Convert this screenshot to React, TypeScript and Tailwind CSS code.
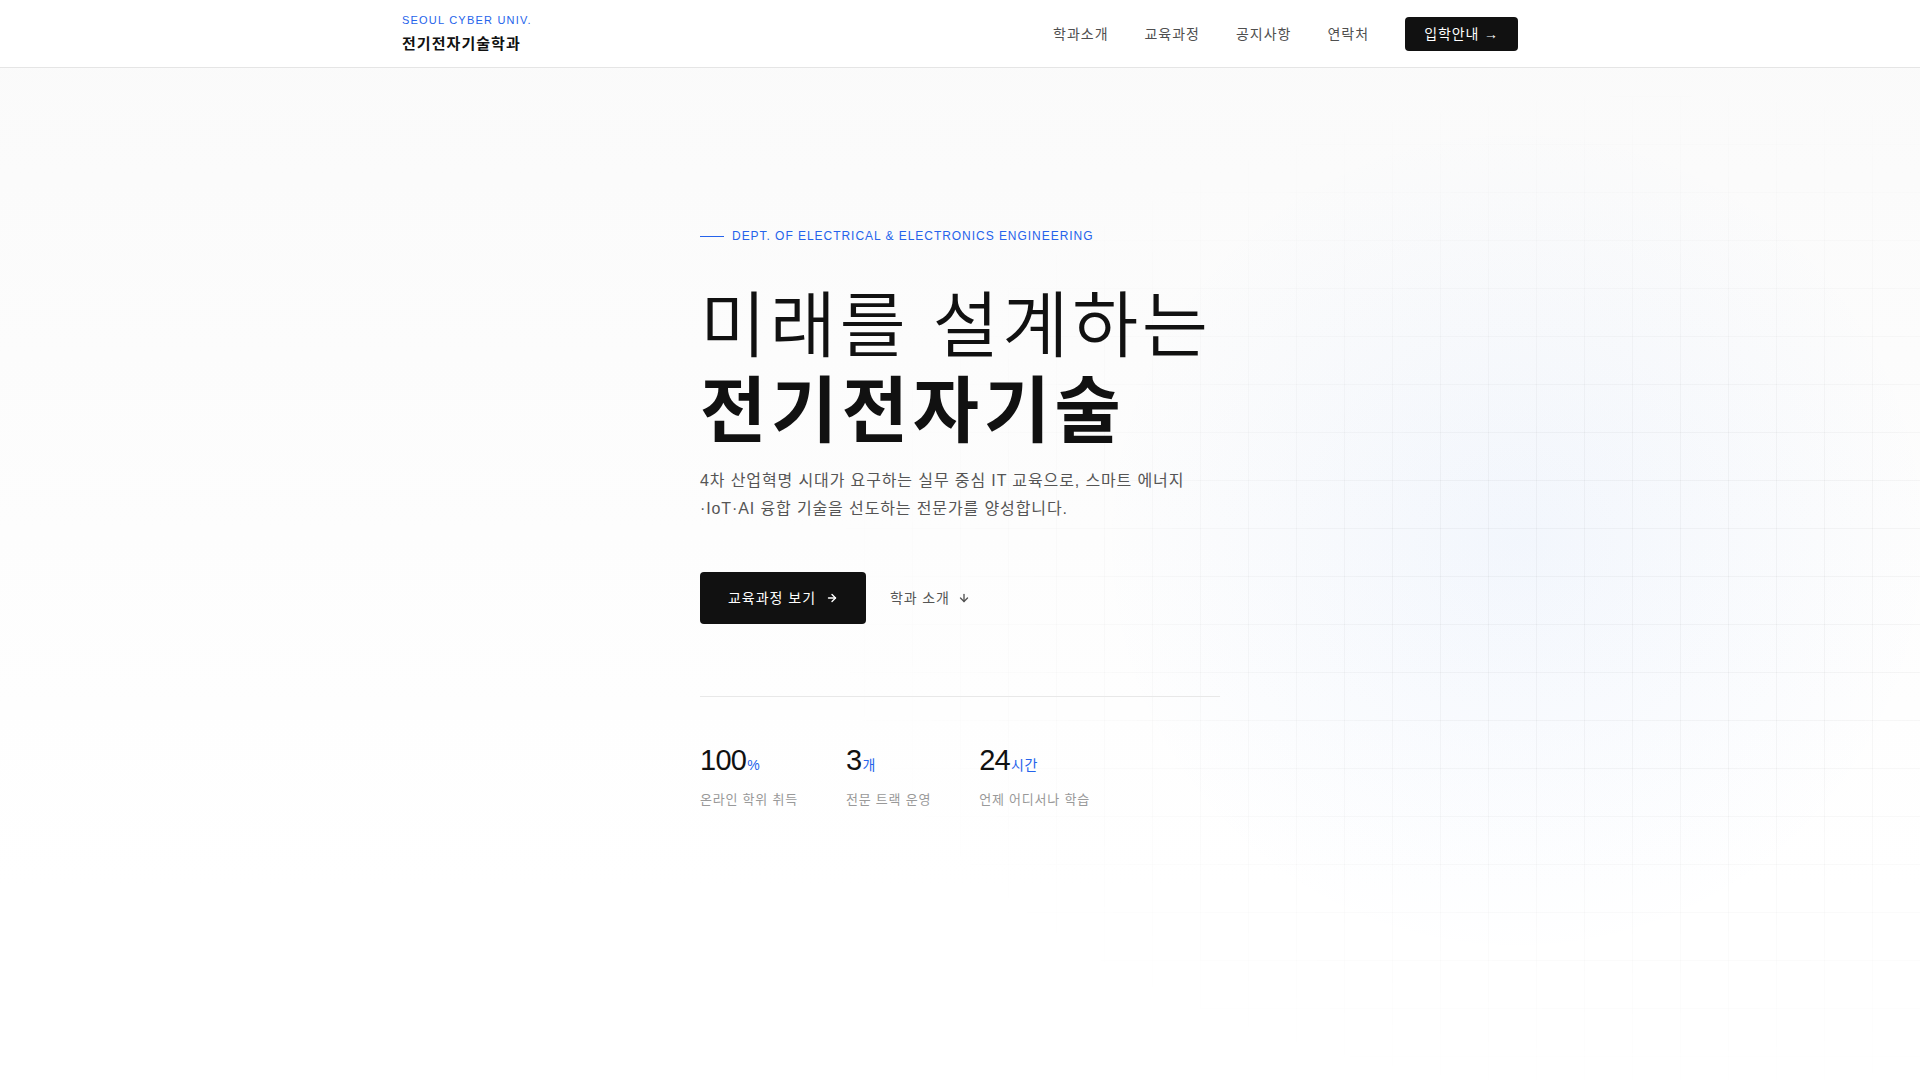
import { ArrowDown, ArrowRight } from "lucide-react";

const navItems = ["학과소개", "교육과정", "공지사항", "연락처"];

const stats = [
  { value: "100", unit: "%", label: "온라인 학위 취득" },
  { value: "3", unit: "개", label: "전문 트랙 운영" },
  { value: "24", unit: "시간", label: "언제 어디서나 학습" },
];

function Header() {
  return (
    <header className="fixed inset-x-0 top-0 z-20 border-b border-[#e5e5e5] bg-white">
      <div className="mx-auto flex h-[67px] w-[1116px] items-center justify-between">
        <a href="#" className="flex flex-col">
          <span className="text-[11px] leading-4 tracking-[0.11em] text-[#2563eb]">SEOUL CYBER UNIV.</span>
          <span className="mt-[5px] text-[15px] font-bold leading-[22px] tracking-[0.07em] text-[#111]">전기전자기술학과</span>
        </a>
        <nav className="flex items-center gap-9">
          {navItems.map((item) => (
            <a key={item} href="#" className="text-sm leading-5 tracking-[0.07em] text-[#4f4f4f]">
              {item}
            </a>
          ))}
          <a
            href="#"
            className="flex h-[34px] w-[113px] items-center justify-center rounded-[4px] bg-[#111] text-sm tracking-[0.06em] text-white"
          >
            입학안내 →
          </a>
        </nav>
      </div>
    </header>
  );
}

function Stat({ value, unit, label }: { value: string; unit: string; label: string }) {
  return (
    <div className="flex flex-col">
      <div className="flex items-baseline leading-[28px]">
        <span className="text-[29px] leading-[28px] tracking-tight text-[#111]">{value}</span>
        <span className="ml-px text-sm leading-[28px] tracking-[0.05em] text-[#2563eb]">{unit}</span>
      </div>
      <span className="mt-[11px] text-[13px] leading-5 tracking-[0.06em] text-[#999]">{label}</span>
    </div>
  );
}

export default function App() {
  return (
    <div className="min-h-screen bg-white font-['Liberation_Sans','Noto_Sans_CJK_KR',sans-serif] antialiased">
      <Header />

      {/* Hero */}
      <section className="relative min-h-screen overflow-hidden bg-[linear-gradient(to_bottom,#fafafa,#ffffff_82%)]">
        {/* grid */}
        <div className="pointer-events-none absolute inset-0 bg-[linear-gradient(to_right,rgba(0,0,0,0.035)_1px,transparent_1px),linear-gradient(to_bottom,rgba(0,0,0,0.035)_1px,transparent_1px)] bg-[size:48px_48px] [mask-image:radial-gradient(ellipse_55%_60%_at_86%_55%,#000_25%,transparent_80%)] [-webkit-mask-image:radial-gradient(ellipse_55%_60%_at_86%_55%,#000_25%,transparent_80%)]" />
        {/* glow */}
        <div className="pointer-events-none absolute inset-0 bg-[radial-gradient(circle_420px_at_79%_50%,rgba(59,130,246,0.055),transparent)]" />

        <div className="relative mx-auto w-[520px] pt-[228px]">
          <div className="flex h-4 items-center gap-2">
            <span className="h-px w-6 bg-[#2563eb]" />
            <span className="text-[12px] leading-4 tracking-[0.08em] text-[#2563eb]">
              DEPT. OF ELECTRICAL &amp; ELECTRONICS ENGINEERING
            </span>
          </div>

          <h1 className="mt-10 whitespace-nowrap text-[72px] leading-[85px] text-[#111]">
            <span className="block font-[350] tracking-[0.048em]">미래를 설계하는</span>
            <span className="block font-bold tracking-[0.065em]">전기전자기술</span>
          </h1>

          <p className="mt-[13px] text-base leading-7 tracking-[0.055em] text-[#555]">
            4차 산업혁명 시대가 요구하는 실무 중심 IT 교육으로, 스마트 에너지
            <br />
            ·IoT·AI 융합 기술을 선도하는 전문가를 양성합니다.
          </p>

          <div className="mt-[49px] flex items-center gap-6">
            <a href="#" className="flex items-center gap-2.5 rounded-[4px] bg-[#111] px-7 py-4 text-sm leading-5 tracking-[0.07em] text-white">
              교육과정 보기
              <ArrowRight size={12} strokeWidth={2.75} />
            </a>
            <a href="#" className="flex items-center gap-2 text-sm leading-5 tracking-[0.06em] text-[#555]">
              학과 소개
              <ArrowDown size={12} strokeWidth={2.75} />
            </a>
          </div>

          <div className="mt-[72px] h-px bg-[#e8e8e8]" />

          <div className="flex gap-12 pt-[49px]">
            {stats.map((s) => (
              <Stat key={s.label} {...s} />
            ))}
          </div>
        </div>
      </section>
    </div>
  );
}
